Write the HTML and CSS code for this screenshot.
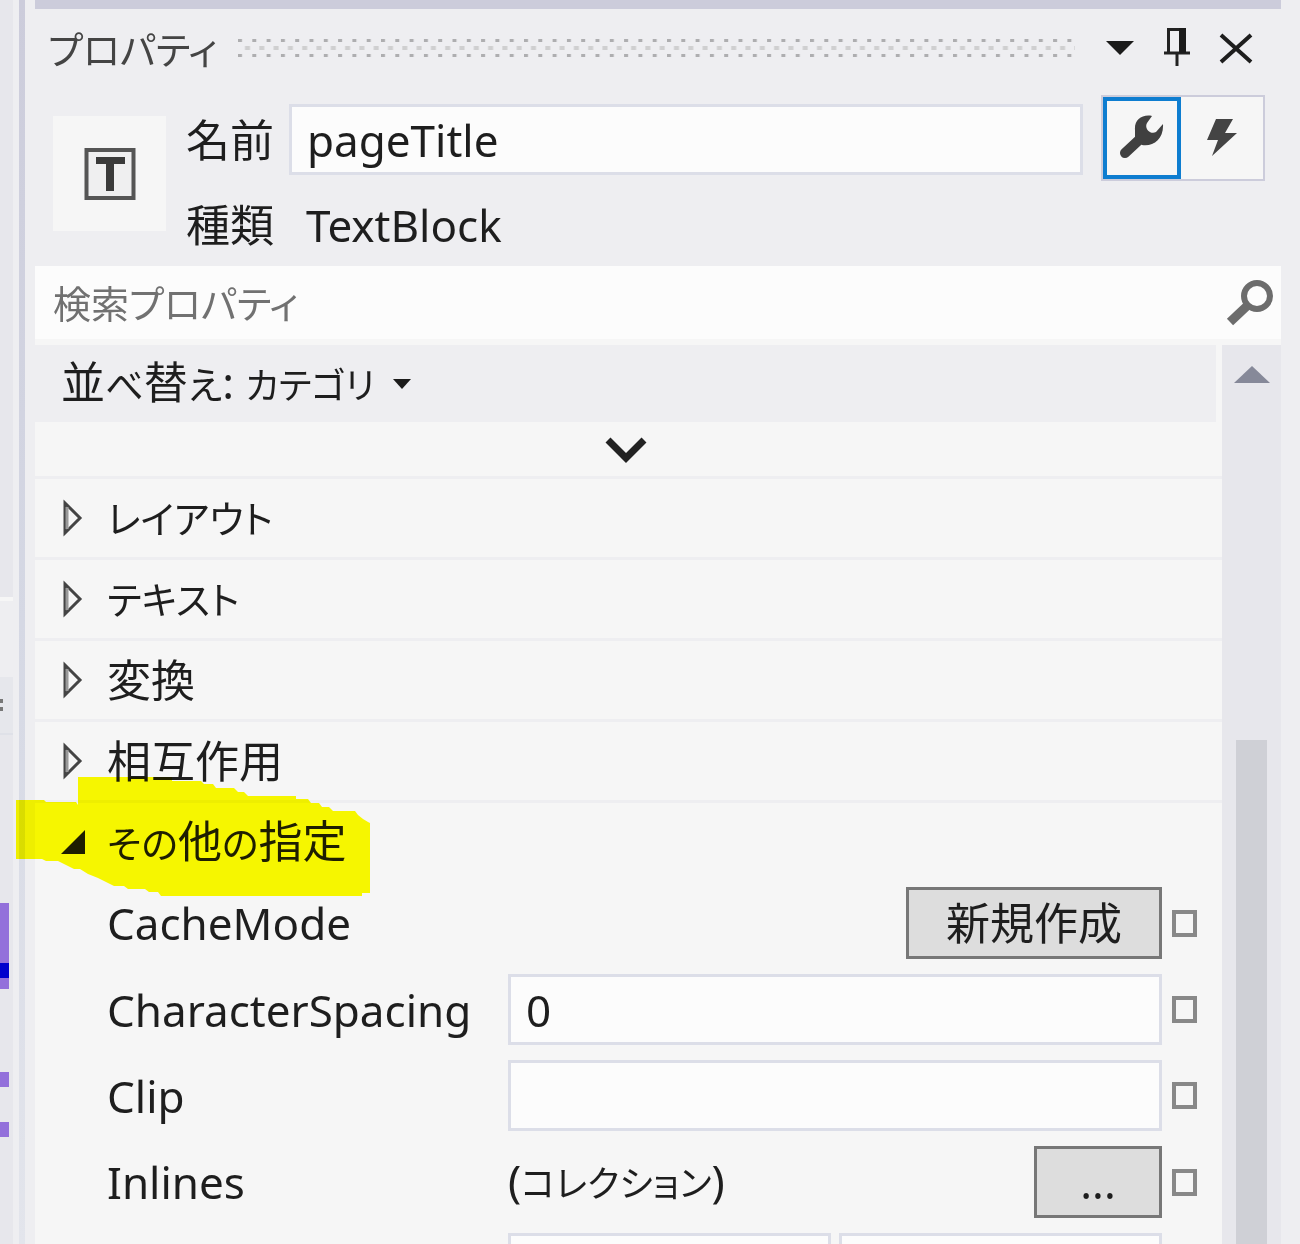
FILE: index.html
```html
<!DOCTYPE html>
<html lang="ja">
<head>
<meta charset="utf-8">
<title>プロパティ</title>
<link rel="stylesheet" href="styles.css">
</head>
<body>
<div class="workspace">
  <aside class="editor-edge">
    <div class="edge-track"></div>
    <div class="edge-gap"></div>
    <div class="edge-split"><i></i><i></i></div>
    <div class="edge-map">
      <div class="mark mark-first"></div>
      <div class="mark mark-caret"></div>
      <div class="mark mark-rest"></div>
      <div class="mark mark-single"></div>
      <div class="mark mark-last"></div>
    </div>
  </aside>
  <div class="splitter"></div>
  <main class="panel">
    <header class="titlebar">
      <h1><span class="kana">プロパティ</span></h1>
      <svg class="grip" aria-hidden="true">
        <defs>
          <pattern id="dots" width="14.3" height="20" patternUnits="userSpaceOnUse">
            <rect x="0" y="1" width="4" height="3" fill="#aeaeb0"/>
            <rect x="7" y="8" width="5" height="4" fill="#cfcfd0"/>
            <rect x="0" y="16" width="4" height="3" fill="#aeaeb0"/>
          </pattern>
        </defs>
        <rect width="100%" height="20" fill="url(#dots)"/>
      </svg>
      <div class="window-tools">
        <button type="button" aria-label="メニュー"><svg width="30" height="44" viewBox="0 0 30 44"><path d="M1 19h28L15 33z" fill="#1b1b1b"/></svg></button>
        <button type="button" aria-label="自動的に隠す"><svg width="28" height="44" viewBox="0 0 28 44"><path d="M5.500 30V7.500h14V30M1 31h26M14 32v16" fill="none" stroke="#222" stroke-width="3"/><path d="M16 6h7v25h-7z" fill="#1b1b1b"/></svg></button>
        <button type="button" aria-label="閉じる"><svg width="36" height="44" viewBox="0 0 36 44"><path d="M2 13l30 27M32 13L2 40" fill="none" stroke="#1e1e1e" stroke-width="4"/></svg></button>
      </div>
    </header>

    <section class="identity">
      <div class="type-tile">
        <svg width="52" height="54" viewBox="0 0 52 54"><path d="M2.500 3h47v48h-47z" fill="#efeff0" stroke="#555" stroke-width="4"/><path d="M12 10h29v7h-11v27h-8V17H12z" fill="#3a3a3a"/></svg>
      </div>
      <div class="identity-fields">
        <label for="name">名前</label>
        <input id="name" class="field" type="text" value="pageTitle">
        <span>種類</span>
        <span class="type-name">TextBlock</span>
      </div>
      <div class="view-switch">
        <button type="button" class="selected" aria-label="プロパティ"><svg width="46" height="46" viewBox="0 0 46 46"><path d="M6 38L20 25" stroke="#404040" stroke-width="10" stroke-linecap="round"/><path d="M33 1C23-1 15 5 16 15L16 23L23 30C34 32 45 24 44 9L37 17C31 20 25 13 28 8z" fill="#404040"/></svg></button>
        <button type="button" aria-label="イベント"><svg width="30" height="40" viewBox="0 0 30 40"><path d="M9 1h17l-8 14h12L5 38l6-16H0z" fill="#444"/></svg></button>
      </div>
    </section>

    <div class="search">
      <input type="search" placeholder="検索プロパティ" aria-label="検索プロパティ">
      <button type="button" aria-label="検索"><svg width="48" height="48" viewBox="0 0 48 48"><circle cx="32" cy="17" r="13" fill="none" stroke="#6c6c6c" stroke-width="6"/><path d="M22 27L5 43" stroke="#6c6c6c" stroke-width="9"/></svg></button>
    </div>

    <div class="body">
      <div class="content">
        <button type="button" class="sort"><span>並<span class="kana">べ</span>替<span class="kana">え</span>: <span class="kana narrow">カテゴリ</span></span><svg width="18" height="10" viewBox="0 0 18 10"><path d="M0 0h18L9 10z" fill="#1b1b1b"/></svg></button>
        <button type="button" class="more" aria-label="詳細"><svg width="44" height="30" viewBox="0 0 44 30"><path d="M4 4l18 18L40 4" fill="none" stroke="#222" stroke-width="7"/></svg></button>
        <button type="button" class="category"><svg width="24" height="38" viewBox="0 0 24 38"><path d="M4 4v30L19 19z" fill="#f6f6f6" stroke="#444" stroke-width="3"/><path d="M6 8v22" stroke="#999" stroke-width="3"/></svg><span class="kana">レイアウト</span></button>
        <button type="button" class="category"><svg width="24" height="38" viewBox="0 0 24 38"><path d="M4 4v30L19 19z" fill="#f6f6f6" stroke="#444" stroke-width="3"/><path d="M6 8v22" stroke="#999" stroke-width="3"/></svg><span class="kana">テキスト</span></button>
        <button type="button" class="category"><svg width="24" height="38" viewBox="0 0 24 38"><path d="M4 4v30L19 19z" fill="#f6f6f6" stroke="#444" stroke-width="3"/><path d="M6 8v22" stroke="#999" stroke-width="3"/></svg>変換</button>
        <button type="button" class="category"><svg width="24" height="38" viewBox="0 0 24 38"><path d="M4 4v30L19 19z" fill="#f6f6f6" stroke="#444" stroke-width="3"/><path d="M6 8v22" stroke="#999" stroke-width="3"/></svg>相互作用</button>
        <button type="button" class="category"><svg width="24" height="38" viewBox="0 0 24 38"><path d="M24 7v24H0z" fill="#1e1e1e"/></svg><span><span class="kana">その</span>他<span class="kana">の</span>指定</span><svg class="marker-pen" width="354" height="119" viewBox="0 0 354 119"><path d="M0 23h28l2 2h30l2 3V0h94v4h29l3 3h9l3 4h18l4 4h6l4 4h48v3h12l3 4h8l3 4h7l4 4h22l3 4 5 4 5 3 6 3v64l-4 4h-8v3H145l-3-4h-9l-4-3h-17l-4-3h-10l-8-4-8-4-10-4-8-5H58l-8-4-8-4H30l-4-2H0z" fill="#ff0"/></svg></button>

        <div class="properties">
          <div class="property">
            <label for="cache">CacheMode</label>
            <div class="value"><button id="cache" class="push push-wide" type="button">新規作成</button></div>
            <button class="option" type="button" aria-label="オプション"></button>
          </div>
          <div class="property">
            <label for="spacing">CharacterSpacing</label>
            <div class="value"><input id="spacing" class="field" type="text" value="0"></div>
            <button class="option" type="button" aria-label="オプション"></button>
          </div>
          <div class="property">
            <label for="clip">Clip</label>
            <div class="value"><input id="clip" class="field" type="text"></div>
            <button class="option" type="button" aria-label="オプション"></button>
          </div>
          <div class="property">
            <label for="inlines">Inlines</label>
            <div class="value"><span>(<span class="kana narrow">コレクション</span>)</span><button id="inlines" class="push" type="button">...</button></div>
            <button class="option" type="button" aria-label="オプション"></button>
          </div>
          <div class="property">
            <span></span>
            <div class="value"><input class="field" type="text" aria-label="X"><input class="field" type="text" aria-label="Y"></div>
          </div>
        </div>
      </div>
      <div class="scrollbar">
        <svg width="36" height="18" viewBox="0 0 36 18"><path d="M0 17L18 0l18 17z" fill="#868999"/></svg>
        <div class="thumb"></div>
      </div>
    </div>
  </main>
</div>
</body>
</html>
```
FILE: styles.css
```css
* { box-sizing: border-box; }

body {
  margin: 0;
  background: #eeeef1;
  color: #1e1e1e;
  font: 44px/60px "Noto Sans", "Noto Sans CJK JP", sans-serif;
  font-feature-settings: "palt";
}

button, input {
  margin: 0;
  padding: 0;
  border: 0;
  border-radius: 0;
  background: none;
  color: inherit;
  font: inherit;
  font-feature-settings: inherit;
}

svg { display: block; flex: none; }

/* Kana is set smaller than kanji, as in a compact UI face */
.kana { font-size: 38px; }
.narrow { font-size: 36px; }

.workspace {
  display: flex;
  height: 100vh;
  overflow: hidden;
}

/* Edge of the neighbouring editor with its scroll map */
.editor-edge {
  display: flex;
  flex-direction: column;
  width: 13px;
  background: #e7e7ec;
}
.edge-track { height: 597px; }
.edge-gap { height: 80px; border-top: 4px solid #f6f6f6; background: #eeeef1; }
.edge-split {
  display: flex;
  flex-direction: column;
  justify-content: center;
  gap: 4px;
  height: 58px;
  background: #e6e7ec;
  border-bottom: 2px solid #dfe1e8;
}
.edge-split i { width: 3px; height: 4px; background: #777; }
.edge-map { padding-top: 168px; }
.mark { width: 9px; height: 15px; background: #9370db; }
.mark-first { height: 60px; }
.mark-caret { background: #0000cd; }
.mark-rest { height: 11px; }
.mark-single { margin-top: 83px; }
.mark-last { margin-top: 35px; }

.splitter {
  width: 6px;
  margin: 0 10px 0 6px;
  background: linear-gradient(#ccccdb, #d5d8e4 50%, #e3e5ec);
}

.panel {
  display: flex;
  flex: 1;
  flex-direction: column;
  min-width: 0;
  margin-right: 19px;
  border-top: 9px solid #ccccdb;
}

.titlebar {
  display: flex;
  align-items: center;
  height: 78px;
  padding: 0 26px 0 13px;
}
h1 {
  flex: none;
  width: 190px;
  margin: 0;
  color: #444;
  font-size: 44px;
  font-weight: 400;
  line-height: 60px;
  white-space: nowrap;
}
.grip { flex: 1; min-width: 0; height: 20px; }
.window-tools { display: flex; gap: 28px; margin-left: 30px; padding-bottom: 8px; }

.identity {
  display: flex;
  align-items: flex-start;
  height: 179px;
  padding: 8px 16px 0 18px;
}
.type-tile {
  display: grid;
  place-items: center;
  width: 113px;
  height: 115px;
  margin: 21px 20px 0 0;
  background: #f6f6f6;
}
.identity-fields {
  display: grid;
  flex: 1;
  grid-template-columns: 103px 1fr;
  align-items: center;
  row-gap: 20px;
  padding-top: 9px;
}
.type-name { padding-left: 17px; }
.field {
  flex: 1;
  width: 100%;
  min-width: 0;
  height: 71px;
  padding: 0 15px;
  border: 3px solid #dcdee8;
  background: #fcfcfc;
}
.view-switch {
  display: flex;
  margin-left: 18px;
  border: 2px solid #ccccdb;
  background: #f6f6f6;
}
.view-switch button {
  display: grid;
  place-items: center;
  width: 82px;
  height: 82px;
}
.view-switch .selected { width: 78px; border: 4px solid #0e7dd0; }

.search {
  display: flex;
  align-items: center;
  flex: none;
  height: 73px;
  padding: 0 8px 0 18px;
  background: #fcfcfc;
}
.search input { flex: 1; min-width: 0; outline: 0; appearance: none; font-size: 38px; }
.search input::placeholder { color: #717171; opacity: 1; }

.body {
  display: flex;
  flex: 1;
  min-height: 0;
  padding-top: 6px;
  background: #f6f6f6;
}
.content { flex: 1; min-width: 0; }
.sort {
  display: flex;
  align-items: center;
  gap: 18px;
  width: calc(100% - 6px);
  height: 77px;
  padding-left: 26px;
  background: #eeeef1;
}
.more {
  display: grid;
  place-items: center;
  width: 100%;
  height: 54px;
  padding: 4px 6px 0 0;
}
.category {
  position: relative;
  display: flex;
  align-items: center;
  gap: 22px;
  width: 100%;
  height: 81px;
  padding-left: 26px;
  border-top: 3px solid #eeeef1;
  text-align: left;
}
.marker-pen {
  position: absolute;
  top: -26px;
  left: -19px;
  mix-blend-mode: multiply;
}

.properties {
  display: grid;
  gap: 15px;
  padding: 6px 24px 0 72px;
}
.property {
  display: grid;
  grid-template-columns: 401px 1fr 36px;
  align-items: center;
}
.value { display: flex; align-items: center; gap: 8px; }
.push {
  width: 128px;
  height: 72px;
  margin-left: auto;
  border: 3px solid #777;
  background: #ddd;
}
.push-wide { width: 256px; }
.option {
  width: 25px;
  height: 27px;
  margin-left: 10px;
  border: 4px solid #888;
}

.scrollbar {
  display: flex;
  flex-direction: column;
  align-items: center;
  width: 59px;
  padding-top: 21px;
  background: #e7e7ec;
}
.thumb {
  flex: 1;
  width: 31px;
  margin-top: 356px;
  background: #cfd0d6;
}
```
